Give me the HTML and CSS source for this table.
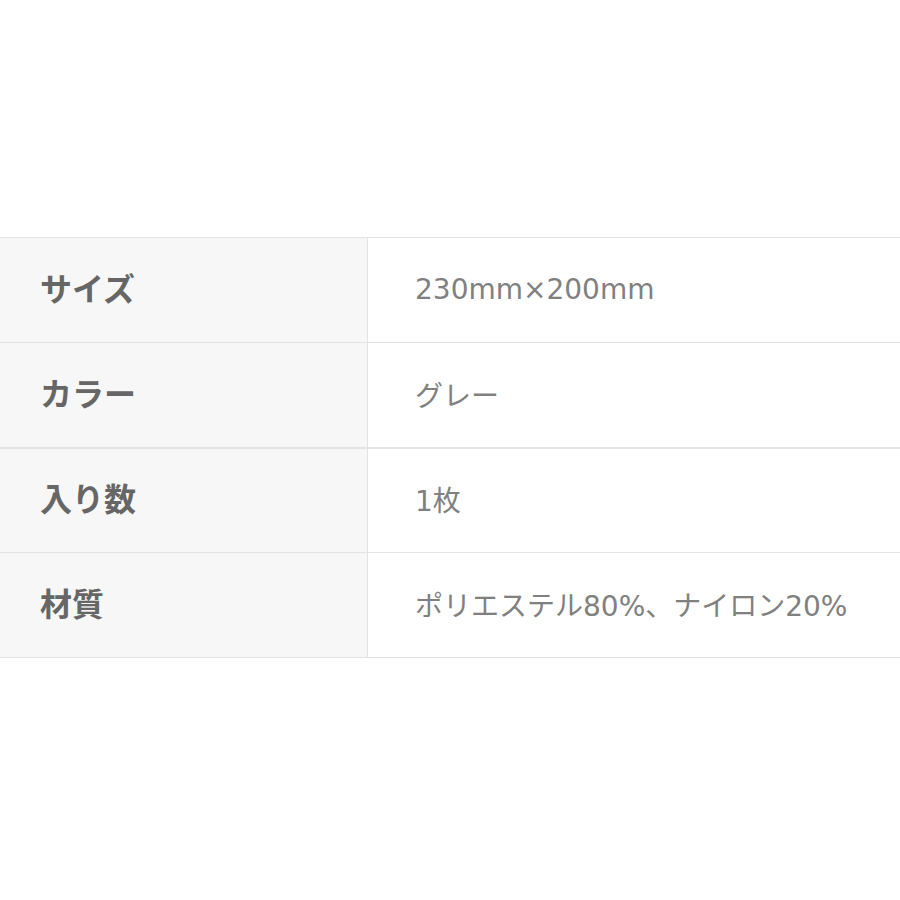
FILE: index.html
```html
<!DOCTYPE html>
<html lang="ja">
<head>
<meta charset="utf-8">
<link rel="stylesheet" href="styles.css">
</head>
<body>
<div class="page">
  <table class="spec">
    <tr><th>サイズ</th><td>230mm×200mm</td></tr>
    <tr><th>カラー</th><td>グレー</td></tr>
    <tr class="thick"><th>入り数</th><td>1枚</td></tr>
    <tr><th>材質</th><td>ポリエステル80%、ナイロン20%</td></tr>
  </table>
</div>
</body>
</html>
```
FILE: styles.css
```css
html, body {
  margin: 0;
  padding: 0;
  background: #fff;
}
.page {
  padding-top: 237px;
}
.spec {
  width: 900px;
  border-collapse: collapse;
  font-family: "Noto Sans CJK JP", "Noto Sans", sans-serif;
}
.spec tr {
  height: 105px;
  border-top: 1px solid #e3e3e3;
  border-bottom: 1px solid #e3e3e3;
}
.spec tr.thick {
  border-top: 2px solid #e3e3e3;
}
.spec th {
  width: 327px;
  padding: 0 0 6px 40px;
  background: #f7f7f7;
  border-right: 1px solid #e3e3e3;
  text-align: left;
  font-weight: 700;
  font-size: 32px;
  color: #666;
}
.spec td {
  padding: 0 0 2px 47px;
  font-family: "DejaVu Sans", "Noto Sans CJK JP", sans-serif;
  font-weight: 400;
  font-size: 28px;
  color: #808080;
  text-align: left;
}
```
